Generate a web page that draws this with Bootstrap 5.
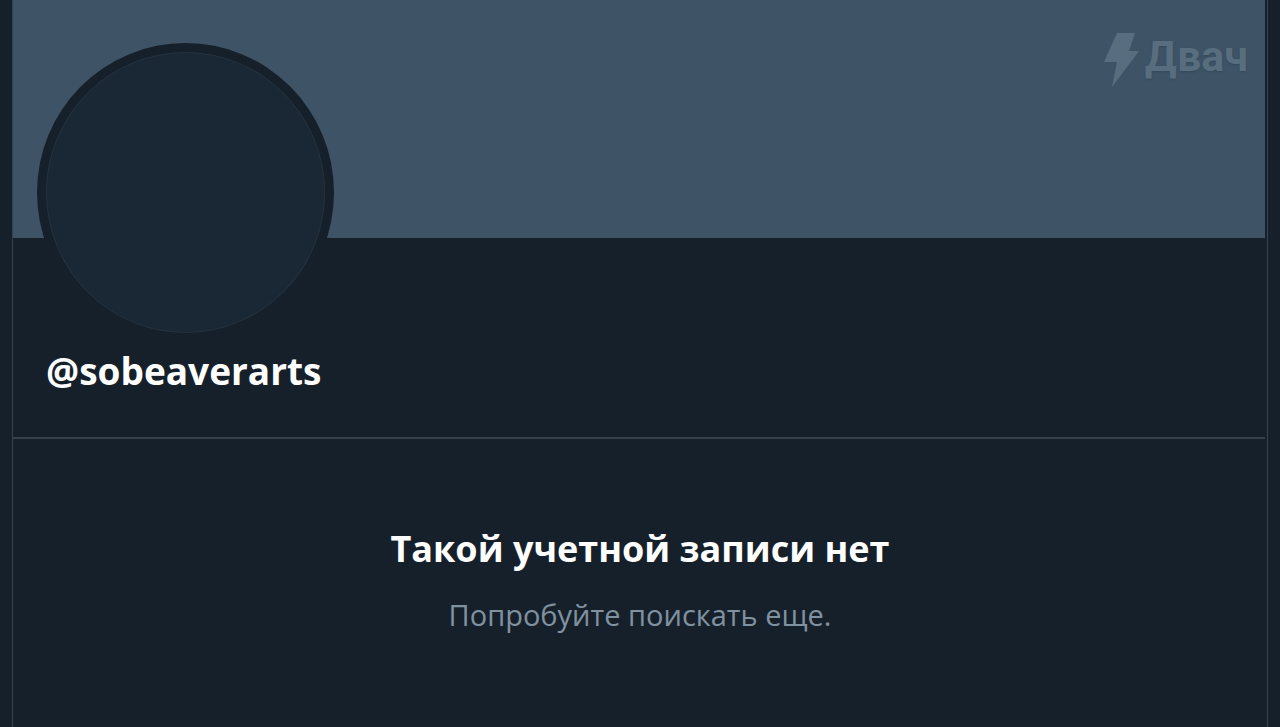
<!DOCTYPE html>
<html lang="ru">
<head>
<meta charset="utf-8">
<meta name="viewport" content="width=device-width, initial-scale=1">
<title>Профиль</title>
<link href="https://cdn.jsdelivr.net/npm/bootstrap@5.3.0/dist/css/bootstrap.min.css" rel="stylesheet">
<style>
body{background:#16202a;color:#fff;font-family:"Open Sans","Noto Sans",sans-serif}
.page{margin:0 12px;border:solid #38444d;border-width:0 1px}
.cover{height:238px;background:#3e5466;margin-right:2px}
.watermark{top:33px;right:19px;gap:5px;color:#586d7d;font:700 43px/46px Roboto,sans-serif;text-shadow:0 1px 2px #34495a}
.avatar{width:297px;height:299px;margin:-195px 0 0 24px;border:9px solid #16202a;background:#1a2734}
.avatar-ring{border:1px solid #25323e}
.handle{font-size:37px;line-height:48px;margin:5px 0 0 33px;font-weight:700}
.profile-head{margin-right:2px;padding-bottom:42px;border-bottom:2px solid #34404a}
.notice{padding:86px 16px 32px}
.notice-title{font-size:36px;line-height:48px;font-weight:700;margin-bottom:22px}
.notice-text{font-size:29px;line-height:40px;color:#8091a0}
</style>
</head>
<body>
<main class="page position-relative min-vh-100">
<div class="cover"></div>
<div class="watermark position-absolute d-flex"><svg width="36" height="55" viewBox="0 0 36 55" fill="currentColor" aria-hidden="true"><path d="M13 0h18L25 18h10L8 54l5-25H0z"/></svg><span>Двач</span></div>
<header class="profile-head d-flex flex-column align-items-start"><div class="avatar rounded-circle"><div class="avatar-ring rounded-circle w-100 h-100"></div></div><h1 class="handle">@sobeaverarts</h1></header>
<section class="notice text-center"><h2 class="notice-title">Такой учетной записи нет</h2><p class="notice-text mb-0">Попробуйте поискать еще.</p></section>
</main>
<script src="https://cdn.jsdelivr.net/npm/bootstrap@5.3.0/dist/js/bootstrap.bundle.min.js"></script>
</body>
</html>
